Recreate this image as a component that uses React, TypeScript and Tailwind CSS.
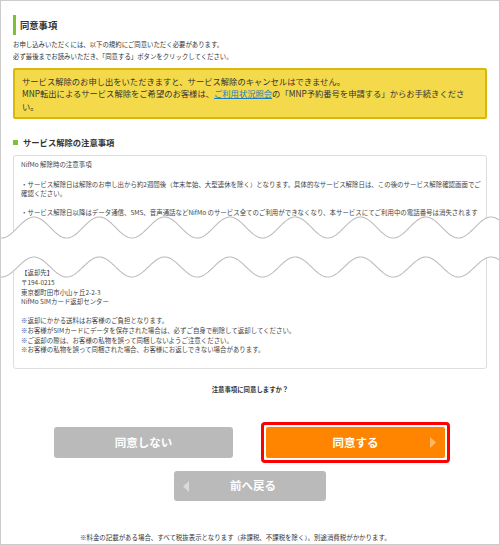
import React from "react";

const FONT = '"Noto Sans CJK JP", "Noto Sans", sans-serif';

function wavePoints(center: number, amp: number, from: number, to: number, step: number) {
  const pts: [number, number][] = [];
  for (let x = from; x <= to + 0.001; x += step) {
    const y = center - amp * Math.cos((2 * Math.PI * (x - 33)) / 65.3);
    pts.push([x, y]);
  }
  return pts;
}

function WaveBreak() {
  const top = wavePoints(26.5, 10.5, -4, 504, 1);
  const bottom = wavePoints(66, 10, -4, 504, 1);
  const topD = top.map((p, i) => `${i ? "L" : "M"}${p[0].toFixed(1)} ${p[1].toFixed(2)}`).join(" ");
  const botD = bottom.map((p, i) => `${i ? "L" : "M"}${p[0].toFixed(1)} ${p[1].toFixed(2)}`).join(" ");
  const fillD =
    topD +
    " " +
    bottom
      .slice()
      .reverse()
      .map((p) => `L${p[0].toFixed(1)} ${p[1].toFixed(2)}`)
      .join(" ") +
    " Z";
  return (
    <svg className="absolute left-0 top-[200px] w-[500px] h-[90px]" viewBox="0 0 500 90" aria-hidden="true">
      <path d={fillD} fill="#ffffff" />
      <path d={topD} fill="none" stroke="#bdbdbd" strokeWidth="1.1" />
      <path d={botD} fill="none" stroke="#bdbdbd" strokeWidth="1.1" />
    </svg>
  );
}

export default function App() {
  return (
    <div
      className="relative w-[500px] h-[545px] border border-[#cccccc] bg-white overflow-hidden text-[#333333]"
      style={{ fontFamily: FONT }}
    >
      <div className="px-[12px]">
        {/* Title */}
        <div className="mt-[14px] flex items-center h-[20px]">
          <div className="w-[3px] h-[20px] bg-[#7cc234]" />
          <h1 className="ml-[4px] text-[9.3px] font-bold leading-[20px] text-[#333333]">同意事項</h1>
        </div>

        {/* Intro */}
        <div className="mt-[4px] text-[6.4px] leading-[12px] text-[#333333]">
          <p>お申し込みいただくには、以下の規約にご同意いただく必要があります。</p>
          <p>必ず最後までお読みいただき、「同意する」ボタンをクリックしてください。</p>
        </div>

        {/* Yellow notice */}
        <div className="mt-[5px] h-[51px] border-2 border-[#d9b70c] bg-[#f4d94a] rounded-[2px] px-[7px] py-[4.5px] text-[8.3px] leading-[12.5px] text-[#333333]">
          <p className="whitespace-nowrap">サービス解除のお申し出をいただきますと、サービス解除のキャンセルはできません。</p>
          <p className="whitespace-nowrap">
            MNP転出によるサービス解除をご希望のお客様は、
            <span className="text-[#1a7fc0] underline">ご利用状況照会</span>
            の「MNP予約番号を申請する」からお手続きくださ
          </p>
          <p className="whitespace-nowrap">い。</p>
        </div>

        {/* Section heading */}
        <div className="mt-[17px] flex items-center h-[12px]">
          <div className="w-[5px] h-[5px] bg-[#7cc234]" />
          <h2 className="ml-[5px] text-[8.3px] font-bold leading-[12px] text-[#333333]">サービス解除の注意事項</h2>
        </div>

        {/* Notes card */}
        <div className="mt-[7px] h-[214px] border border-[#dddddd] rounded-[3px] pl-[7px] pr-[6px] pt-[4.4px] text-[6.45px] leading-[9.6px] text-[#444444]">
          <p className="whitespace-nowrap">NifMo 解除時の注意事項</p>
          <p className="h-[9.6px]" />
          <p className="whitespace-nowrap">
            ・サービス解除日は解除のお申し出から約2週間後（年末年始、大型連休を除く）となります。具体的なサービス解除日は、この後のサービス解除確認画面でご
          </p>
          <p className="whitespace-nowrap">確認ください。</p>
          <p className="h-[9.6px]" />
          <div className="h-[60px] overflow-hidden">
            <p className="whitespace-nowrap">
              ・サービス解除日以降はデータ通信、SMS、音声通話などNifMo のサービス全てのご利用ができなくなり、本サービスにてご利用中の電話番号は消失されます
            </p>
          </div>
          <p className="whitespace-nowrap">【返却先】</p>
          <p className="whitespace-nowrap">〒194-0215</p>
          <p className="whitespace-nowrap">東京都町田市小山ヶ丘2-2-3</p>
          <p className="whitespace-nowrap">NifMo SIMカード返却センター</p>
          <p className="h-[9.6px]" />
          <p className="whitespace-nowrap">※返却にかかる送料はお客様のご負担となります。</p>
          <p className="whitespace-nowrap">※お客様がSIMカードにデータを保存された場合は、必ずご自身で削除して返却してください。</p>
          <p className="whitespace-nowrap">※ご返却の際は、お客様の私物を誤って同梱しないようご注意ください。</p>
          <p className="whitespace-nowrap">※お客様の私物を誤って同梱された場合、お客様にお返しできない場合があります。</p>
        </div>
      </div>

      {/* Question */}
      <p className="mt-[16px] text-center text-[6.4px] font-bold leading-[10px] text-[#333333]">注意事項に同意しますか？</p>

      {/* Buttons */}
      <div className="mt-[27px] flex items-center pl-[53px] gap-[28px] h-[41px]">
        <button className="w-[179px] h-[31px] rounded-[3px] bg-[#bababa] text-white text-[11.5px] font-bold">
          同意しない
        </button>
        <div className="border-[3px] border-[#ff0000] rounded-[4px] p-[2px] bg-white">
          <button className="relative w-[179px] h-[31px] rounded-[2px] bg-[#ff8400] text-white text-[11.5px] font-bold flex items-center justify-center">
            同意する
            <svg className="absolute right-[9px] top-[10px]" width="6" height="11" viewBox="0 0 6 11">
              <path d="M0 0 L6 5.5 L0 11 Z" fill="#ffb86a" />
            </svg>
          </button>
        </div>
      </div>

      <div className="mt-[8px] flex justify-center">
        <button className="relative w-[152px] h-[30px] rounded-[3px] bg-[#bababa] text-white text-[11.5px] font-bold flex items-center justify-center pl-[6px]">
          <svg className="absolute left-[9px] top-[10px]" width="6" height="11" viewBox="0 0 6 11">
            <path d="M6 0 L0 5.5 L6 11 Z" fill="#dadada" />
          </svg>
          前へ戻る
        </button>
      </div>

      <p className="mt-[32px] pl-[79px] text-[6.45px] leading-[10px] text-[#333333] whitespace-nowrap">
        ※料金の記載がある場合、すべて税抜表示となります（非課税、不課税を除く）。別途消費税がかかります。
      </p>

      <WaveBreak />
    </div>
  );
}
